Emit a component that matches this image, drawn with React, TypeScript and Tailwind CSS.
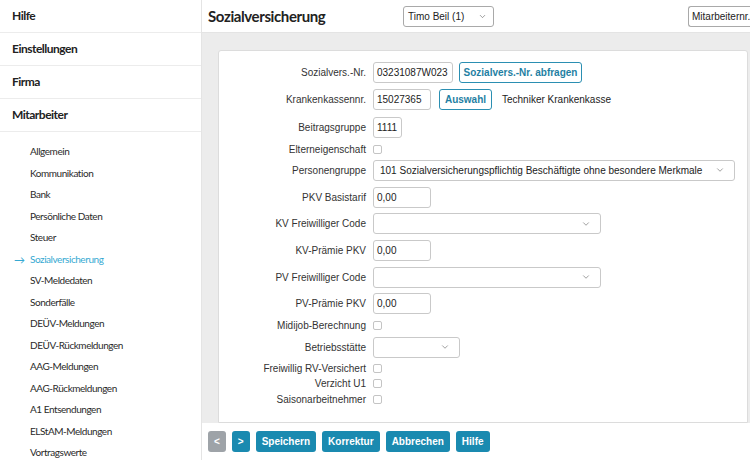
import { ChevronDown } from 'lucide-react'

const topItems = ['Hilfe', 'Einstellungen', 'Firma', 'Mitarbeiter']

const subItems = [
    'Allgemein',
    'Kommunikation',
    'Bank',
    'Persönliche Daten',
    'Steuer',
    'Sozialversicherung',
    'SV-Meldedaten',
    'Sonderfälle',
    'DEÜV-Meldungen',
    'DEÜV-Rückmeldungen',
    'AAG-Meldungen',
    'AAG-Rückmeldungen',
    'A1 Entsendungen',
    'ELStAM-Meldungen',
    'Vortragswerte',
]

function Sidebar() {
    return (
        <div className="w-[202px] shrink-0 border-r border-[#e4e4e4] bg-white font-['Lato',sans-serif]">
            {topItems.map((item) => (
                <div key={item} className="h-[33px] flex items-center pl-3 border-b border-[#ececec] text-[12px] font-bold tracking-[-0.5px] text-[#222]">
                    {item}
                </div>
            ))}
            <div className="pt-[9px]">
                {subItems.map((item) => {
                    const active = item === 'Sozialversicherung'
                    return (
                        <div
                            key={item}
                            className={`relative h-[21.5px] flex items-center pl-[30px] text-[10px] tracking-[-0.45px] ${active ? 'text-[#35a9d2]' : 'text-[#2a2a2a]'}`}
                        >
                            {active && <span className="absolute left-[14px] text-[11px] leading-none tracking-normal">→</span>}
                            {item}
                        </div>
                    )
                })}
            </div>
        </div>
    )
}

function Input({ value = '', w }: { value?: string; w: string }) {
    return (
        <div className={`${w} h-[21px] border border-[#c9c9c9] rounded-[3px] bg-white flex items-center pl-[3px] text-[10px] text-[#222] whitespace-nowrap`}>
            {value}
        </div>
    )
}

function Select({ value = '', w }: { value?: string; w: string }) {
    return (
        <div className={`${w} h-[21px] border border-[#c9c9c9] rounded-[3px] bg-white flex items-center justify-between pl-[6px] pr-[9px] text-[10px] text-[#222] whitespace-nowrap`}>
            <span>{value}</span>
            <ChevronDown className="w-[10px] h-[10px] text-[#666] shrink-0" strokeWidth={1.5} />
        </div>
    )
}

function Check() {
    return <span className="block w-[9px] h-[9px] border border-[#c4c4c4] rounded-[2px] bg-white" />
}

function Row({ label, h, children }: { label: string; h: string; children: React.ReactNode }) {
    return (
        <div className={`${h} flex items-center`}>
            <div className="w-[154px] text-right text-[10px] text-[#333] pr-[7px] shrink-0 whitespace-nowrap">{label}</div>
            <div className="flex items-center gap-[6px]">{children}</div>
        </div>
    )
}

function OutlineButton({ children, w }: { children: React.ReactNode; w: string }) {
    return (
        <div className={`${w} h-[21px] border border-[#2b8fb2] rounded-[3px] flex items-center justify-center text-[10px] font-bold text-[#1f7fa3] whitespace-nowrap`}>
            {children}
        </div>
    )
}

function FooterButton({ children, gray }: { children: React.ReactNode; gray?: boolean }) {
    return (
        <div
            className={`h-[21px] px-[6px] rounded-[3px] flex items-center justify-center text-[10px] font-bold text-white ${gray ? 'bg-[#9ea3a8]' : 'bg-[#1a8ab0]'}`}
        >
            {children}
        </div>
    )
}

export default function App() {
    return (
        <div className="w-[750px] h-[460px] flex overflow-hidden bg-white">
            <Sidebar />
            <div className="flex-1 flex flex-col min-w-0">
                <div className="h-[33px] shrink-0 border-b border-[#e4e4e4] flex items-center pl-[6px]">
                    <div className="w-[195px] font-['Lato',sans-serif] text-[15px] font-bold tracking-[-0.4px] text-[#222]">Sozialversicherung</div>
                    <div className="w-[91px] h-[21px] border border-[#a9a9a9] rounded-[3px] flex items-center justify-between pl-[4px] pr-[6px] font-['Liberation_Sans',sans-serif] text-[10px] text-[#222]">
                        <span>Timo Beil (1)</span>
                        <ChevronDown className="w-[9px] h-[9px] text-[#555]" strokeWidth={1.5} />
                    </div>
                    <div className="ml-auto w-[62px] h-[21px] border border-r-0 border-[#a9a9a9] rounded-l-[3px] flex items-center pl-[3px] font-['Liberation_Sans',sans-serif] text-[10px] text-[#222] whitespace-nowrap overflow-hidden">
                        Mitarbeiternr.
                    </div>
                </div>
                <div className="flex-1 bg-[#ececec] pl-[16px] pr-[2px] pt-[17px] min-h-0">
                    <div className="h-full bg-white border border-[#dcdcdc] rounded-t-[3px] pt-[8px] font-['Liberation_Sans',sans-serif]">
                        <Row label="Sozialvers.-Nr." h="h-[27px]">
                            <Input value="03231087W023" w="w-[80px]" />
                            <OutlineButton w="w-[123px]">Sozialvers.-Nr. abfragen</OutlineButton>
                        </Row>
                        <Row label="Krankenkassennr." h="h-[27px]">
                            <Input value="15027365" w="w-[58px]" />
                            <div className="ml-[2px]">
                                <OutlineButton w="w-[53px]">Auswahl</OutlineButton>
                            </div>
                            <span className="ml-[4px] text-[10px] text-[#222]">Techniker Krankenkasse</span>
                        </Row>
                        <Row label="Beitragsgruppe" h="h-[29px]">
                            <Input value="1111" w="w-[29px]" />
                        </Row>
                        <Row label="Elterneigenschaft" h="h-[14px]">
                            <Check />
                        </Row>
                        <Row label="Personengruppe" h="h-[28px]">
                            <Select value="101 Sozialversicherungspflichtig Beschäftigte ohne besondere Merkmale" w="w-[362px]" />
                        </Row>
                        <Row label="PKV Basistarif" h="h-[26px]">
                            <Input value="0,00" w="w-[58px]" />
                        </Row>
                        <Row label="KV Freiwilliger Code" h="h-[27px]">
                            <Select w="w-[228px]" />
                        </Row>
                        <Row label="KV-Prämie PKV" h="h-[27px]">
                            <Input value="0,00" w="w-[58px]" />
                        </Row>
                        <Row label="PV Freiwilliger Code" h="h-[26px]">
                            <Select w="w-[228px]" />
                        </Row>
                        <Row label="PV-Prämie PKV" h="h-[27px]">
                            <Input value="0,00" w="w-[58px]" />
                        </Row>
                        <Row label="Midijob-Berechnung" h="h-[16px]">
                            <Check />
                        </Row>
                        <Row label="Betriebsstätte" h="h-[28px]">
                            <Select w="w-[87px]" />
                        </Row>
                        <Row label="Freiwillig RV-Versichert" h="h-[14px]">
                            <Check />
                        </Row>
                        <Row label="Verzicht U1" h="h-[16px]">
                            <Check />
                        </Row>
                        <Row label="Saisonarbeitnehmer" h="h-[16px]">
                            <Check />
                        </Row>
                    </div>
                </div>
                <div className="h-[37px] shrink-0 bg-white flex items-center gap-[6px] pl-[6px] font-['Liberation_Sans',sans-serif]">
                    <FooterButton gray>&lt;</FooterButton>
                    <FooterButton>&gt;</FooterButton>
                    <FooterButton>Speichern</FooterButton>
                    <FooterButton>Korrektur</FooterButton>
                    <FooterButton>Abbrechen</FooterButton>
                    <FooterButton>Hilfe</FooterButton>
                </div>
            </div>
        </div>
    )
}
